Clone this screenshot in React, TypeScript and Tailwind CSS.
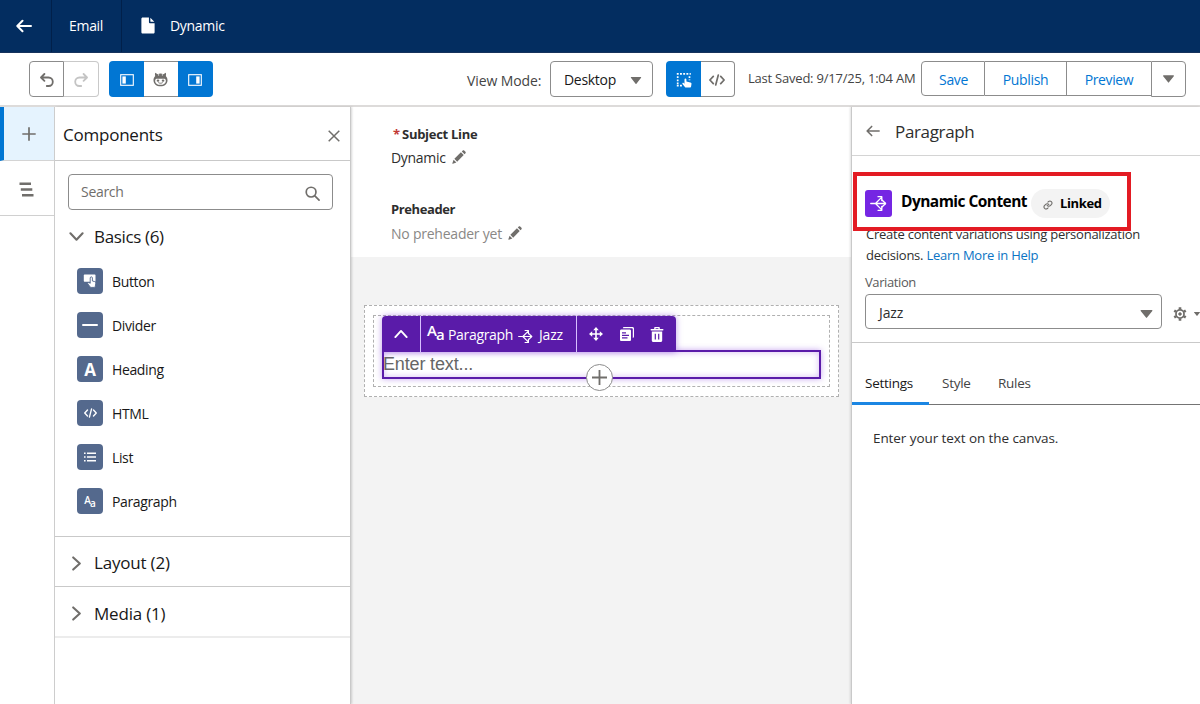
import React from "react";

type IconProps = { className?: string };

const Caret = ({ className = "" }: IconProps) => (
  <svg viewBox="0 0 12 8" className={className} fill="currentColor">
    <path d="M.6 0h10.800c.5 0 .7.5.4.9L6.500 7.600a.6.6 0 0 1-1 0L.2.9C-.1.5.1 0 .6 0z" />
  </svg>
);

const ArrowLeft = ({ className = "" }: IconProps) => (
  <svg viewBox="0 0 16 16" className={className} fill="none" stroke="currentColor" strokeLinecap="round" strokeLinejoin="round">
    <path d="M15 8H1.500M6.500 2.800 1.300 8l5.200 5.200" />
  </svg>
);

const Chevron = ({ className = "" }: IconProps) => (
  <svg viewBox="0 0 16 16" className={className} fill="none" stroke="currentColor" strokeWidth="2.200" strokeLinecap="round" strokeLinejoin="round">
    <path d="m1.500 4.500 6.500 7 6.500-7" />
  </svg>
);

const Undo = ({ className = "" }: IconProps) => (
  <svg viewBox="0 0 14 14" className={className} fill="none" stroke="currentColor" strokeWidth="1.800" strokeLinecap="round" strokeLinejoin="round">
    <path d="M4.400 1 1 4.500l3.400 3.400M1.200 4.500h7.300a4.300 4.300 0 0 1 4.300 4.300c0 2.300-1.700 4.200-4.100 4.200H6.800" />
  </svg>
);

const PanelIcon = ({ className = "" }: IconProps) => (
  <svg viewBox="0 0 14 12" className={className} fill="none">
    <rect x=".7" y=".7" width="12.600" height="10.600" stroke="currentColor" strokeWidth="1.100" />
    <rect x="2.400" y="2.400" width="3.400" height="7.200" fill="currentColor" />
  </svg>
);

const Mascot = ({ className = "" }: IconProps) => (
  <svg viewBox="0 0 16 16" className={className}>
    <path fill="#706e6b" d="M2.300.8c.8.3 1.600.8 2.200 1.500 1-.4 2.200-.6 3.500-.6s2.500.2 3.500.6C12.100 1.600 12.900 1.100 13.700.8c.3 1.300.3 2.300 0 3.400a6.300 6.300 0 0 1 1.800 4.500c0 3.900-3.300 6.500-7.500 6.500S.5 12.600.5 8.700c0-1.800.7-3.300 1.800-4.500-.3-1.100-.3-2.100 0-3.400z" />
    <path fill="#fff" d="M5.200 7.300c1.100-.3 4.500-.3 5.600 0 1.600-.3 2.900.3 2.900 1.900 0 2.700-2.300 4.500-5.700 4.500s-5.700-1.800-5.700-4.500c0-1.600 1.300-2.200 2.900-1.900z" />
    <ellipse cx="5.300" cy="9.200" rx="1.400" ry="1.100" fill="#706e6b" />
    <ellipse cx="10.700" cy="9.200" rx="1.400" ry="1.100" fill="#706e6b" />
    <path stroke="#706e6b" strokeWidth="1" fill="none" strokeLinecap="round" d="M6 11.500c1 .7 3 .7 4 0" />
    <path stroke="#fff" strokeWidth=".7" d="M6 1v3M10 1v3" />
  </svg>
);

const HandSelect = ({ className = "" }: IconProps) => (
  <svg viewBox="0 0 16 16" className={className} fill="none">
    <path stroke="currentColor" strokeWidth="1.700" strokeDasharray="1.900 1.300" d="M.8 1.800h14M.8 13.600h5.500" />
    <path stroke="currentColor" strokeWidth="1.700" strokeDasharray="1.900 1.300" d="M1.700 4.200v8M13.500 4.200v4" />
    <path fill="currentColor" d="M8.500 7.400c0-1.200 1.800-1.200 1.900 0v2.100l4 .9c.8.2 1.200.7 1.100 1.400l-.4 2.800c-.1.500-.4.900-.9.900H10c-.5 0-.8-.2-1.100-.600l-2.400-2.800c-.6-.8.4-1.800 1.200-1.100l.8.700z" />
  </svg>
);

const Code = ({ className = "" }: IconProps) => (
  <svg viewBox="0 0 16 12" className={className} fill="none" stroke="currentColor" strokeWidth="1.700" strokeLinecap="round" strokeLinejoin="round">
    <path d="M4.300 2.300.9 6l3.400 3.700M11.700 2.300 15.100 6l-3.400 3.700M9.300 1 6.700 11" />
  </svg>
);

const Pencil = ({ className = "" }: IconProps) => (
  <svg viewBox="0 0 16 16" className={className} fill="currentColor">
    <path d="M11.200 1.600 12.300.6c.5-.5 1.100-.5 1.600 0l1.500 1.500c.5.500.5 1.100 0 1.600l-1 1.100zM10.200 2.600 13.400 5.800 5.900 13.300 2.700 10.100zM1.800 11l3.200 3.200-4 1.400c-.4.100-.7-.2-.6-.6z" />
  </svg>
);

const Branch = ({ className = "" }: IconProps) => (
  <svg viewBox="0 0 18 18" className={className} fill="none" stroke="currentColor" strokeWidth="1.400" strokeLinecap="round" strokeLinejoin="round">
    <path d="M.8 9h15M5.800 9l6.200-6.200M5.800 9l6.200 6.200M8.500 1.800h4v4M8.500 16.200h4v-4" />
    <path d="M13 5.500 16.500 9 13 12.500" />
    <circle cx="16" cy="9" r="1" fill="currentColor" stroke="none" />
  </svg>
);

const Letters = ({ className = "" }: IconProps) => (
  <span className={`inline-flex items-start font-['Open_Sans',sans-serif] leading-none ${className}`}>
    <span>A</span>
    <span className="mt-[0.3em] -ml-px">a</span>
  </span>
);

function ComponentTile({ children }: { children: React.ReactNode }) {
  return <span className="flex size-[26px] items-center justify-center rounded bg-[#54698d] text-white">{children}</span>;
}

const basics: { label: string; icon: React.ReactNode }[] = [
  {
    label: "Button",
    icon: (
      <svg viewBox="0 0 14 14" className="size-[14px]">
        <path fill="#fff" d="M1.800.5h9.700c.6 0 1 .4 1 1v5.300c0 .6-.4 1-1 1H1.800c-.6 0-1-.4-1-1V1.500c0-.6.4-1 1-1z" />
        <path fill="#fff" stroke="#54698d" strokeWidth=".9" d="M7.200 4c0-1.600 2.200-1.600 2.200 0v3l2.300.6c.8.200 1.200.7 1.100 1.500l-.5 3.300c-.1.600-.4 1-1 1H8.200c-.5 0-.9-.2-1.200-.7L4.900 9.900c-.6-.9.5-1.900 1.300-1.200l1 .6z" />
      </svg>
    ),
  },
  { label: "Divider", icon: <span className="h-[2px] w-4 rounded bg-white" /> },
  {
    label: "Heading",
    icon: <span className="font-['Open_Sans',sans-serif] text-[17px] leading-none font-bold">A</span>,
  },
  { label: "HTML", icon: <Code className="h-[10px] w-[13px]" /> },
  {
    label: "List",
    icon: (
      <svg viewBox="0 0 12 10" className="h-[10px] w-[12px]" stroke="#fff" strokeWidth="1.500">
        <path d="M0 1.200h1.600M3 1.200h9M0 5h1.600M3 5h9M0 8.800h1.600M3 8.800h9" />
      </svg>
    ),
  },
  { label: "Paragraph", icon: <Letters className="text-[10px] font-semibold" /> },
];

function TopBar() {
  return (
    <header className="flex h-[53px] shrink-0 items-stretch border-b border-[#16325c] bg-[#032d60] text-white">
      <div className="flex w-[52px] items-center justify-center border-r border-[#01204a] pr-[3px]">
        <ArrowLeft className="size-4 stroke-2" />
      </div>
      <div className="flex w-[70px] items-center border-r border-[#01204a] pb-0.5 pl-[17px] text-[14px] tracking-[-0.3px]">Email</div>
      <div className="flex items-center gap-[14px] pb-0.5 pl-[18px]">
        <svg viewBox="0 0 16 18" className="h-[17px] w-4" fill="#fff">
          <path d="M2.400.5H9v5c0 .6.400 1 1 1h5v9.600c0 .8-.6 1.400-1.400 1.400H2.400C1.600 17.500 1 16.900 1 16.100V1.900C1 1.100 1.600.5 2.400.5zM10.500.8l4.200 4.200h-3.600c-.4 0-.6-.2-.6-.6z" />
        </svg>
        <span className="text-[14px] tracking-[-0.3px]">Dynamic</span>
      </div>
    </header>
  );
}

function Toolbar() {
  return (
    <div className="flex h-[54px] shrink-0 items-start border-b-2 border-[#dddbda] bg-white pt-2 text-[14px]">
      <div className="ml-[29px] flex h-9 w-[70px]">
        <div className="flex w-[35px] items-center justify-center rounded-l border border-[#8c8c8c] pt-px pl-px text-[#706e6b]">
          <Undo className="size-[14px]" />
        </div>
        <div className="flex w-[35px] items-center justify-center rounded-r border border-l-0 border-[#c9c9c9] pt-px text-[#c4c4c4]">
          <Undo className="size-[14px] -scale-x-100" />
        </div>
      </div>
      <div className="ml-[10px] flex h-9 w-[104px]">
        <div className="flex w-[35px] items-center justify-center rounded-l bg-[#0176d3] pt-px text-white">
          <PanelIcon className="h-[12px] w-[14px]" />
        </div>
        <div className="flex w-[34px] items-center justify-center border-y border-[#8c8c8c] pr-px">
          <Mascot className="size-[15px]" />
        </div>
        <div className="flex w-[35px] items-center justify-center rounded-r bg-[#0176d3] pt-px pr-px text-white">
          <PanelIcon className="h-[12px] w-[14px] -scale-x-100" />
        </div>
      </div>
      <div className="ml-[254px] flex h-9 w-[83px] items-center pt-[3px] tracking-[-0.1px] whitespace-nowrap text-[#444]">View Mode:</div>
      <div className="flex h-9 w-[103px] items-center justify-between rounded border border-[#8c8c8c] pr-[10px] pl-[13px] text-[#181818]">
        <span className="tracking-[-0.3px]">Desktop</span>
        <Caret className="mt-0.5 h-[7px] w-[12px] text-[#706e6b]" />
      </div>
      <div className="ml-[13px] flex h-9 w-[69px]">
        <div className="flex w-[35px] items-center justify-center rounded-l bg-[#0176d3] pt-px text-white">
          <HandSelect className="size-4" />
        </div>
        <div className="flex w-[34px] items-center justify-center rounded-r border border-l-0 border-[#8c8c8c] pr-px pt-px text-[#706e6b]">
          <Code className="h-[12px] w-[16px]" />
        </div>
      </div>
      <div className="ml-[13px] flex h-9 w-[173px] items-center text-[13px] tracking-[-0.22px] whitespace-nowrap text-[#444]">
        Last Saved: 9/17/25, 1:04 AM
      </div>
      <div className="flex h-[35px] items-stretch tracking-[-0.36px] text-[#0176d3]">
        <div className="flex w-[64px] items-center justify-center rounded-l border border-[#8c8c8c] pt-px pl-px">Save</div>
        <div className="flex w-[82px] items-center justify-center border-y border-r border-[#8c8c8c] pt-px">Publish</div>
        <div className="flex w-[84px] items-center justify-center border-y border-[#8c8c8c] pt-px">Preview</div>
      </div>
      <div className="flex h-9 w-[35px] items-center justify-center rounded-r border border-[#8c8c8c] pr-px text-[#706e6b]">
        <Caret className="h-[8px] w-[11px]" />
      </div>
    </div>
  );
}

function Rail() {
  return (
    <nav className="flex w-[55px] shrink-0 flex-col border-r border-[#d0d0d0] bg-white">
      <div className="flex h-[54px] items-center justify-center border-b border-l-4 border-b-[#d4d4d4] border-l-[#0176d3] bg-[#e5f3fe] text-[#706e6b]">
        <svg viewBox="0 0 14 14" className="size-[14px]" stroke="currentColor" strokeWidth="1.700">
          <path d="M7 .3v13.400M.3 7h13.400" />
        </svg>
      </div>
      <div className="flex h-[55px] items-center justify-center border-b border-[#d0d0d0] pt-0.5 pr-0.5 text-[#706e6b]">
        <svg viewBox="0 0 15 15" className="size-[15px]" stroke="currentColor" strokeWidth="2.600">
          <path d="M.5 1.700h11.500M1.800 7.500h11.500M3 13.200h11.500" />
        </svg>
      </div>
    </nav>
  );
}

function ComponentsPanel() {
  return (
    <aside className="z-10 flex w-[296px] shrink-0 flex-col border-r border-[#c9c9c9] bg-white text-[#181818] shadow-[1px_0_2px_rgba(0,0,0,0.16)]">
      <div className="flex h-[54px] items-center justify-between border-b border-[#c9c9c9] pr-[10px] pl-2">
        <h2 className="pt-0.5 text-[17px] tracking-[-0.23px]">Components</h2>
        <svg viewBox="0 0 12 12" className="mt-1 size-[12px] text-[#706e6b]" fill="none" stroke="currentColor" strokeWidth="1.500">
          <path d="m.7.7 10.600 10.600M11.300.7.7 11.300" />
        </svg>
      </div>
      <div className="mt-[13px] ml-[13px] flex h-9 w-[265px] items-center justify-between rounded border border-[#8c8c8c] pr-[12px] pl-3 text-[#706e6b]">
        <span className="pb-px text-[14px] tracking-[-0.3px]">Search</span>
        <svg viewBox="0 0 16 16" className="mt-0.5 size-[15px]" fill="none" stroke="currentColor" strokeWidth="1.800" strokeLinecap="round">
          <circle cx="6.500" cy="6.500" r="5.200" />
          <path d="m10.500 10.500 4.500 4.500" />
        </svg>
      </div>
      <div className="flex h-[50px] items-center gap-[10px] pt-[3px] pl-[14px]">
        <Chevron className="size-[15px] text-[#706e6b]" />
        <h3 className="text-[17px] tracking-[-0.35px]">Basics (6)</h3>
      </div>
      <ul className="-mt-px flex flex-col">
        {basics.map((b) => (
          <li key={b.label} className="flex h-11 items-center gap-[8px] pl-[22px]">
            <ComponentTile>{b.icon}</ComponentTile>
            <span className="pt-px pl-px text-[14px] tracking-[-0.37px]">{b.label}</span>
          </li>
        ))}
      </ul>
      <div className="mt-[13px] flex h-[50px] items-center gap-[10px] border-t border-[#c9c9c9] pt-[3px] pl-[14px]">
        <Chevron className="size-[15px] -rotate-90 text-[#706e6b]" />
        <h3 className="text-[17px] tracking-[-0.2px]">Layout (2)</h3>
      </div>
      <div className="flex h-[52px] items-center gap-[10px] border-t border-b-2 border-t-[#c9c9c9] border-b-[#ececec] pt-1 pl-[14px]">
        <Chevron className="size-[15px] -rotate-90 text-[#706e6b]" />
        <h3 className="text-[17px] tracking-[-0.2px]">Media (1)</h3>
      </div>
    </aside>
  );
}

function SelectedBlock() {
  return (
    <div className="relative h-[64px] text-white">
      <div className="absolute top-[34px] left-0 h-[29px] w-[439px] border-2 border-[#5a1ba9] bg-white font-['Liberation_Sans',Arial,sans-serif] text-[18px] leading-[25px] text-[#666] shadow-[0_0_6px_rgba(130,60,220,0.45),inset_0_0_6px_rgba(130,60,220,0.35)]">
        <span className="-ml-px tracking-[-0.15px]">Enter text...</span>
      </div>
      <div className="absolute top-0 left-0 flex h-9 w-[294px] items-stretch rounded-t bg-[#5a1ba9] text-[14px] shadow-[0_0_6px_rgba(130,60,220,0.5)]">
        <div className="flex w-[39px] items-center justify-center border-r border-[#d7bfff]">
          <Chevron className="size-[14px] rotate-180" />
        </div>
        <div className="flex w-[156px] items-center border-r border-[#d7bfff] pl-[6px] whitespace-nowrap">
          <Letters className="w-[21px] pb-[3px] text-[15px] font-semibold" />
          <span className="w-[70px] pt-px tracking-[-0.33px]">Paragraph</span>
          <Branch className="mt-1 size-[15px]" />
          <span className="pt-px pl-[6px] tracking-[-0.2px]">Jazz</span>
        </div>
        <div className="flex flex-1 items-center gap-[17px] pl-3">
          <svg viewBox="0 0 14 14" className="size-[14px]" fill="currentColor">
            <path d="M7 0 9.800 3.200H7.800v3h3V4.200L14 7l-3.200 2.800v-2h-3v3h2L7 14 4.200 10.800h2v-3h-3v2L0 7l3.200-2.800v2h3v-3h-2z" />
          </svg>
          <svg viewBox="0 0 14 14" className="size-[14px]" fill="currentColor">
            <path d="M4.200 0h8.300c.8 0 1.500.7 1.500 1.500v8c0 .8-.5 1.400-1.200 1.500V2.500c0-.8-.5-1.200-1.200-1.200H2.800C3 .5 3.400 0 4.200 0z" />
            <path fillRule="evenodd" d="M1.300 2.500h8.400c.7 0 1.300.6 1.300 1.300v8.900c0 .7-.6 1.300-1.300 1.300H1.300C.6 14 0 13.400 0 12.700V3.800c0-.7.6-1.300 1.300-1.300zM2 5.300v1.200h4V5.300zm0 2.500V9h7V7.800zm0 2.500v1.200h5.500v-1.200z" />
          </svg>
          <svg viewBox="0 0 14 15" className="h-[15px] w-[14px] -ml-px" fill="currentColor">
            <path fillRule="evenodd" d="M4.200 2V1c0-.6.4-1 1-1h3.600c.6 0 1 .4 1 1v1h3c.4 0 .7.300.7.700s-.3.800-.7.800H1.200c-.4 0-.7-.4-.7-.8S.8 2 1.200 2zm1.400 0h2.800v-.800H5.600z" />
            <path fillRule="evenodd" d="M1.800 4.600h10.400v8.900c0 .8-.7 1.500-1.500 1.500H3.300c-.8 0-1.500-.7-1.500-1.500zM4.700 6.700v5.800h1.200V6.700zm3.400 0v5.800h1.200V6.700z" />
          </svg>
        </div>
      </div>
      <div className="absolute top-[48px] left-[204px] flex size-[27px] items-center justify-center rounded-full border border-[#8c8c8c] bg-white text-[#706e6b]">
        <svg viewBox="0 0 14 14" className="size-[15px]" stroke="currentColor" strokeWidth="1.700">
          <path d="M7 0v14M0 7h14" />
        </svg>
      </div>
    </div>
  );
}

function Canvas() {
  return (
    <main className="flex w-[500px] shrink-0 flex-col bg-[#f3f3f3]">
      <section className="flex h-[150px] flex-col bg-white pt-[18px] pl-[40px] text-[14px] text-[#2e2e2e]">
        <div className="flex h-5 items-center gap-[2px] pl-[2px] text-[13px] font-bold">
          <span className="text-[#c23934]">*</span>
          <span className="tracking-[-0.3px]">Subject Line</span>
        </div>
        <div className="mt-[2px] flex h-5 items-center gap-[6px]">
          <span className="tracking-[-0.3px]">Dynamic</span>
          <Pencil className="size-[14px] text-[#706e6b]" />
        </div>
        <div className="mt-[33px] flex h-5 items-center text-[13px] font-bold tracking-[-0.4px]">Preheader</div>
        <div className="mt-[3px] flex h-5 items-center gap-[6px]">
          <span className="tracking-[-0.23px] text-[#8a8886]">No preheader yet</span>
          <Pencil className="size-[14px] text-[#706e6b]" />
        </div>
      </section>
      <section className="mt-[48px] ml-[13px] h-[92px] w-[475px] border border-dashed border-[#b0b0b0] bg-white py-[9px] pr-[8px] pl-[8px]">
        <div className="h-[72px] border border-dashed border-[#b0b0b0] pl-2">
          <SelectedBlock />
        </div>
      </section>
    </main>
  );
}

function PropertiesPanel() {
  return (
    <aside className="flex min-w-0 flex-1 flex-col border-l border-[#c9c9c9] bg-white text-[14px] text-[#2e2e2e] shadow-[-1px_0_2px_rgba(0,0,0,0.12)]">
      <div className="flex h-[49px] items-center gap-[15px] border-b border-[#d4d4d4] pt-px pl-[14px]">
        <ArrowLeft className="mb-0.5 size-[14px] stroke-[1.8] text-[#706e6b]" />
        <h2 className="pt-px text-[17px] tracking-[-0.35px]">Paragraph</h2>
      </div>
      <div className="relative mt-[16px] ml-px flex h-[59px] w-[278px] items-center border-4 border-[#e31b23] pt-1 pl-2 text-black">
        <span className="flex size-[27px] shrink-0 items-center justify-center rounded-[3px] bg-[#7526e3] text-white">
          <Branch className="size-[17px]" />
        </span>
        <span className="mb-[3px] ml-[9px] w-[130px] text-[15.5px] font-bold tracking-[-0.55px] whitespace-nowrap">Dynamic Content</span>
        <span className="flex h-[29px] w-[79px] items-center gap-[7px] rounded-full bg-[#f3f3f3] pl-3 text-[13px] font-bold tracking-[-0.35px]">
          <svg viewBox="0 0 24 24" className="mt-0.5 size-[10px] shrink-0 text-[#706e6b]" fill="none" stroke="currentColor" strokeWidth="2.600" strokeLinecap="round">
            <path d="M10 13a5 5 0 0 0 7.500.5l3-3a5 5 0 0 0-7-7l-1.700 1.700M14 11a5 5 0 0 0-7.500-.5l-3 3a5 5 0 0 0 7 7l1.700-1.700" />
          </svg>
          Linked
        </span>
      </div>
      <div className="-mt-[7px] pl-[14px] text-[13px] leading-[21px] tracking-[-0.24px] whitespace-nowrap">
        <p>Create content variations using personalization</p>
        <p>
          decisions. <span className="text-[#0b74c4]">Learn More in Help</span>
        </p>
      </div>
      <p className="mt-[6px] pl-[13px] text-[13px] leading-5 tracking-[-0.4px] text-[#5a5a5a]">Variation</p>
      <div className="mt-[2px] flex items-center pl-3">
        <div className="ml-px flex h-[35px] w-[297px] shrink-0 items-center justify-between rounded border border-[#8c8c8c] pr-2 pl-[13px]">
          <span className="pt-px tracking-[-0.1px]">Jazz</span>
          <Caret className="mt-1 h-[8px] w-[13px] text-[#706e6b]" />
        </div>
        <svg viewBox="0 0 16 16" className="mt-1 ml-[11px] size-[14px] shrink-0 text-[#706e6b]" fill="none" stroke="currentColor">
          <circle cx="8" cy="8" r="4.600" strokeWidth="2" />
          <circle cx="8" cy="8" r="1.500" fill="currentColor" strokeWidth="1" />
          <path strokeWidth="3" d="M8 .4v2.400M8 13.200v2.400M1.400 4.200l2.100 1.200M12.500 10.600l2.100 1.200M1.400 11.800l2.100-1.200M12.500 5.400l2.100-1.200" />
        </svg>
        <Caret className="mt-1 ml-[7px] h-[4px] w-[6px] shrink-0 text-[#706e6b]" />
      </div>
      <div className="mt-[13px] border-t border-[#c9c9c9]" />
      <div className="mt-[22px] flex h-10 items-stretch border-b border-[#747474] text-[13.5px] tracking-[-0.27px] text-[#444]">
        <div className="-mb-px flex w-[77px] items-center border-b-3 border-[#1b86e3] pl-[13px] text-[#181818]">Settings</div>
        <div className="flex w-[56px] items-center pb-0.5 pl-[13px]">Style</div>
        <div className="flex items-center pb-0.5 pl-[13px]">Rules</div>
      </div>
      <p className="mt-[23px] pl-[21px] text-[13.5px] tracking-[-0.08px]">Enter your text on the canvas.</p>
    </aside>
  );
}

export default function App() {
  return (
    <div className="flex h-[704px] w-[1200px] flex-col overflow-hidden bg-white font-['Open_Sans','Noto_Sans',sans-serif]">
      <TopBar />
      <Toolbar />
      <div className="flex min-h-0 flex-1">
        <Rail />
        <ComponentsPanel />
        <Canvas />
        <PropertiesPanel />
      </div>
    </div>
  );
}
